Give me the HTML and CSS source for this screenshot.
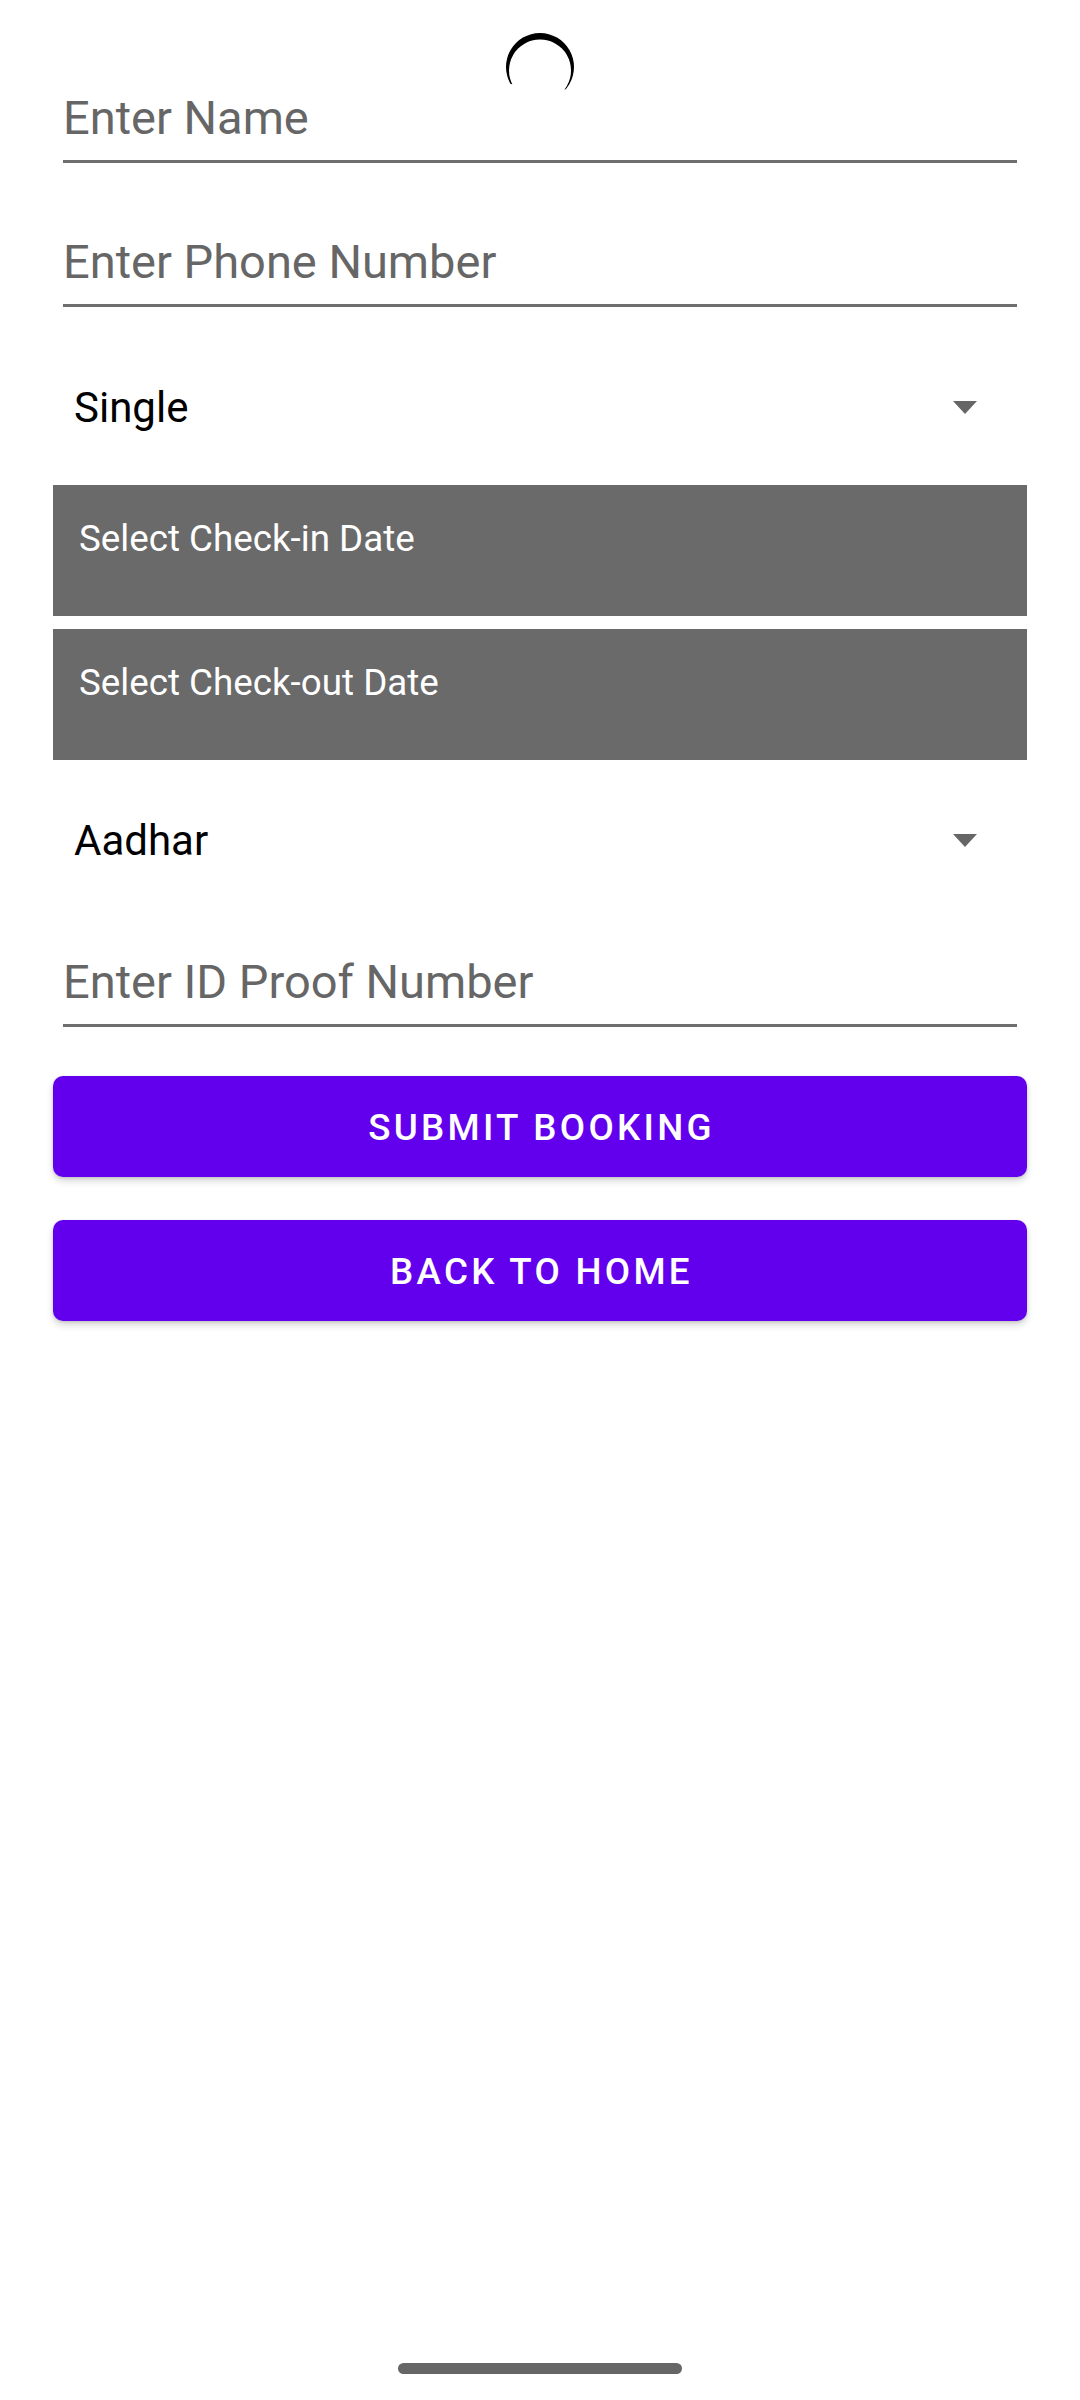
FILE: index.html
```html
<!DOCTYPE html>
<html lang="en">
<head>
<meta charset="utf-8">
<title>Booking</title>
<link rel="stylesheet" href="styles.css">
</head>
<body>
<div class="screen">
  <svg class="loader" viewBox="500 28 80 80" xmlns="http://www.w3.org/2000/svg" aria-hidden="true">
    <defs>
      <clipPath id="arcClip">
        <polygon points="500,28 580,28 580,91 500,83"/>
      </clipPath>
    </defs>
    <path clip-path="url(#arcClip)" fill="#000" fill-rule="evenodd"
      d="M540 33 A34 34 0 1 1 539.99 33 Z M540 39.5 A31 31 0 1 0 540.01 39.5 Z"/>
  </svg>
  <div class="form">
    <div class="field"><span class="hint">Enter Name</span></div>
    <div class="field"><span class="hint">Enter Phone Number</span></div>
    <div class="select select-room"><span class="select-value">Single</span><span class="caret"></span></div>
    <div class="date-box">Select Check-in Date</div>
    <div class="date-box date-box-second">Select Check-out Date</div>
    <div class="select select-id"><span class="select-value">Aadhar</span><span class="caret"></span></div>
    <div class="field field-id"><span class="hint">Enter ID Proof Number</span></div>
    <button class="btn btn-submit">Submit Booking</button>
    <button class="btn btn-home">Back to Home</button>
  </div>
  <div class="home-bar"></div>
</div>
</body>
</html>
```
FILE: styles.css
```css
* { box-sizing: border-box; }

body {
  margin: 0;
  background: #ffffff;
  font-family: Roboto, "Noto Sans", "Liberation Sans", sans-serif;
}

.screen {
  position: relative;
  height: 2400px;
  display: flex;
  flex-direction: column;
}

.loader {
  position: absolute;
  left: 500px;
  top: 28px;
  width: 80px;
  height: 80px;
}

.form {
  display: flex;
  flex-direction: column;
  padding: 19px 53px 0;
}

.field {
  margin: 0 10px;
  padding: 71px 0 15px;
  border-bottom: 3px solid #6e6e6e;
  font-size: 47px;
  line-height: 55px;
  color: #666666;
}

.field-id {
  padding-top: 64px;
}

.select {
  display: flex;
  align-items: center;
  justify-content: space-between;
  height: 100px;
  padding: 0 50px 0 21px;
  font-size: 42px;
  line-height: 49px;
  color: #000000;
}

.select-room {
  margin-top: 50px;
}

.select-id {
  margin-top: 30px;
}

.caret {
  width: 0;
  height: 0;
  border-left: 12.5px solid transparent;
  border-right: 12.5px solid transparent;
  border-top: 13px solid #666666;
}

.date-box {
  height: 131px;
  margin-top: 28px;
  padding: 32px 26px 0;
  background: #6a6a6a;
  color: #ffffff;
  font-size: 36.75px;
}

.date-box-second {
  margin-top: 13px;
}

.btn {
  height: 101px;
  border: none;
  border-radius: 10px;
  padding: 2px 0 0 3px;
  background: #6200ee;
  color: #ffffff;
  font-family: Roboto, "Noto Sans", "Liberation Sans", sans-serif;
  font-weight: 500;
  font-size: 36.75px;
  letter-spacing: 0.0892em;
  text-transform: uppercase;
  box-shadow: 0 4px 7px rgba(0, 0, 0, 0.16), 0 1px 3px rgba(0, 0, 0, 0.12);
}

.btn-submit {
  margin-top: 49px;
}

.btn-home {
  margin-top: 43px;
}

.home-bar {
  width: 284px;
  height: 11px;
  margin: auto auto 26px;
  border-radius: 6px;
  background: #666666;
}
```
